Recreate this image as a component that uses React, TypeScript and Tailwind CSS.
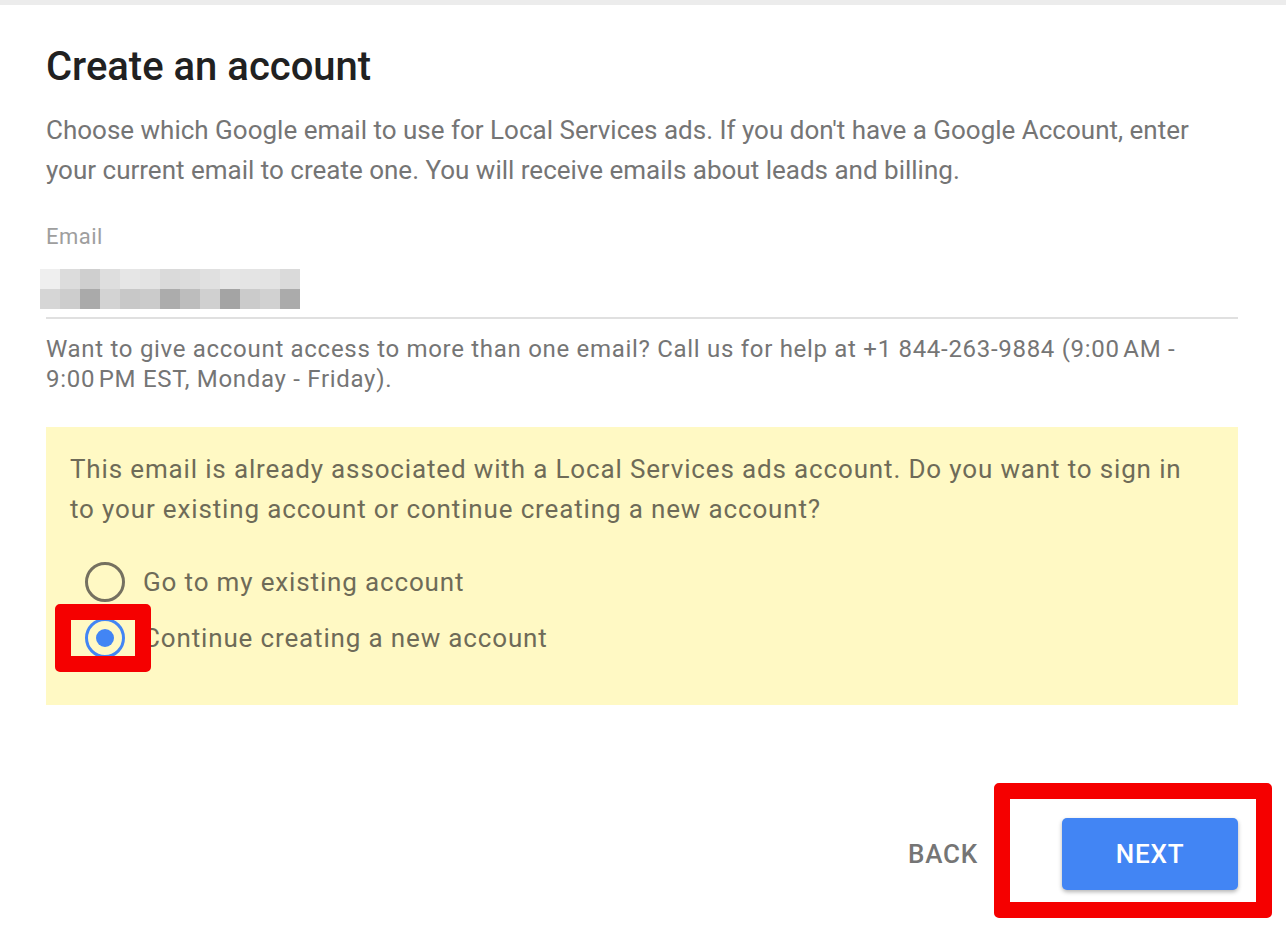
import React, { useState } from 'react';

// blurred email placeholder, two rows of pixel cells
const pixelRows = [
  ['#efefef', '#dcdcdc', '#cfcfcf', '#dedede', '#e6e6e6', '#e3e3e3', '#dadada', '#dcdcdc', '#e0e0e0', '#e6e6e6', '#e4e4e4', '#e3e3e3', '#dadada'],
  ['#d6d6d6', '#cdcdcd', '#aaaaaa', '#d3d3d3', '#c8c8c8', '#cbcbcb', '#acacac', '#bdbdbd', '#d0d0d0', '#a4a4a4', '#cbcbcb', '#d1d1d1', '#ababab'],
];

function Radio({ checked }: { checked: boolean }) {
  return checked ? (
    <span className="flex items-center justify-center w-[40px] h-[40px] rounded-full border-[3px] border-[#4285f4]">
      <span className="w-[18px] h-[18px] rounded-full bg-[#4285f4]" />
    </span>
  ) : (
    <span className="w-[40px] h-[40px] rounded-full border-[3px] border-[#757160]" />
  );
}

export default function App() {
  const [choice, setChoice] = useState<'existing' | 'new'>('new');

  return (
    <div className="relative w-[1286px] h-[948px] bg-white overflow-hidden font-['Roboto','Liberation_Sans',sans-serif]">
      <div className="h-[5px] bg-[#ececec]" />
      <div className="h-[941px] mr-[4px] border-b-2 border-[#b0b0b0] rounded-br-[6px] pl-[46px] pr-[44px]">
        <h1 className="mt-[40px] text-[40px] leading-[44px] font-medium text-[#212121]">Create an account</h1>

        <p className="mt-[21px] text-[26px] leading-[40px] text-[#757575]">
          Choose which Google email to use for Local Services ads. If you don't have a Google Account, enter your current
          email to create one. You will receive emails about leads and billing.
        </p>

        <div className="mt-[33px] text-[22px] leading-[28px] tracking-[0.5px] text-[#9e9e9e]">Email</div>
        <div className="mt-[18px] -ml-[6px] flex flex-col">
          {pixelRows.map((row, i) => (
            <div key={i} className="flex">
              {row.map((c, j) => (
                <span key={j} className="w-[20px] h-[20px]" style={{ backgroundColor: c }} />
              ))}
            </div>
          ))}
        </div>
        <div className="mt-[8px] h-[2px] bg-[#e0e0e0]" />

        <p className="mt-[15px] text-[24px] leading-[30px] tracking-[0.7px] text-[#757575]">
          Want to give account access to more than one email? Call us for help at +1 844-263-9884 (9:00&#8239;AM -
          9:00&#8239;PM EST, Monday - Friday).
        </p>

        <div className="mt-[33px] h-[278px] bg-[#fff9c4] pl-[24px] pr-[40px] pt-[22px]">
          <p className="text-[26px] leading-[40px] tracking-[0.85px] text-[#6e6b58]">
            This email is already associated with a Local Services ads account. Do you want to sign in to your existing
            account or continue creating a new account?
          </p>
          <div className="mt-[33px] flex flex-col gap-[16px]">
            <button
              onClick={() => setChoice('existing')}
              className="flex items-center gap-[18px] ml-[15px] text-left"
            >
              <Radio checked={choice === 'existing'} />
              <span className="text-[26px] leading-[40px] tracking-[0.85px] text-[#6e6b58]">Go to my existing account</span>
            </button>
            <button onClick={() => setChoice('new')} className="flex items-center gap-[18px] ml-[15px] text-left">
              <Radio checked={choice === 'new'} />
              <span className="text-[26px] leading-[40px] tracking-[0.85px] text-[#6e6b58]">Continue creating a new account</span>
            </button>
          </div>
        </div>

        <div className="mt-[113px] flex items-center justify-end gap-[84px]">
          <button className="text-[26px] font-medium tracking-[0.8px] text-[#757575]">BACK</button>
          <button className="w-[176px] h-[72px] rounded-[5px] bg-[#4285f4] text-white text-[26px] font-medium tracking-[0.8px] shadow-[0_2px_4px_rgba(0,0,0,0.3)]">
            NEXT
          </button>
        </div>
      </div>

      {/* red annotation boxes */}
      <div className="absolute left-[55px] top-[604px] w-[96px] h-[68px] border-[16px] border-[#f50000] rounded-[5px]" />
      <div className="absolute left-[994px] top-[783px] w-[278px] h-[135px] border-[16px] border-[#f50000] rounded-[5px]" />
    </div>
  );
}
